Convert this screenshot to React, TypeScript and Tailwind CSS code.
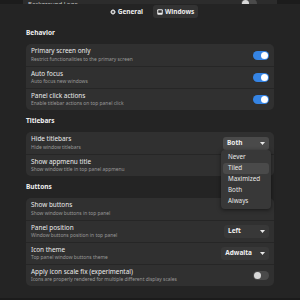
import { useState } from 'react';

type Row = { title: string; sub: string; control: 'on' | 'off' | string; open?: boolean };

const SECTIONS: { heading: string; rows: Row[] }[] = [
  {
    heading: 'Behavior',
    rows: [
      { title: 'Primary screen only', sub: 'Restrict functionalities to the primary screen', control: 'on' },
      { title: 'Auto focus', sub: 'Auto focus new windows', control: 'on' },
      { title: 'Panel click actions', sub: 'Enable titlebar actions on top panel click', control: 'on' },
    ],
  },
  {
    heading: 'Titlebars',
    rows: [
      { title: 'Hide titlebars', sub: 'Hide window titlebars', control: 'Both', open: true },
      { title: 'Show appmenu title', sub: 'Show window title in top panel appmenu', control: 'none' },
    ],
  },
  {
    heading: 'Buttons',
    rows: [
      { title: 'Show buttons', sub: 'Show window buttons in top panel', control: 'none' },
      { title: 'Panel position', sub: 'Window buttons position in top panel', control: 'Left' },
      { title: 'Icon theme', sub: 'Top panel window buttons theme', control: 'Adwaita' },
      { title: 'Apply icon scale fix (experimental)', sub: 'Icons are properly rendered for multiple different display scales', control: 'off' },
    ],
  },
];

const MENU = ['Never', 'Tiled', 'Maximized', 'Both', 'Always'];

function Toggle({ on }: { on: boolean }) {
  return (
    <div className={`w-[16px] h-[9px] rounded-full flex items-center px-[1px] ${on ? 'bg-[#3584e4] justify-end' : 'bg-[#4a4a4a] justify-start'}`}>
      <div className={`w-[7px] h-[7px] rounded-full ${on ? 'bg-white' : 'bg-[#d8d8d8]'}`} />
    </div>
  );
}

function Dropdown({ label, open }: { label: string; open?: boolean }) {
  return (
    <div className={`h-[13px] rounded-[3px] flex items-center justify-between pl-[4px] pr-[4px] gap-[8px] ${open ? 'bg-[#4a4a4a] w-[46px]' : 'bg-[#383838]'} ${label === 'Left' ? 'w-[45px]' : ''}`}>
      <span className="text-[6.5px] font-bold text-[#f0f0f0] leading-none">{label}</span>
      <svg width="5" height="3" viewBox="0 0 5 3"><path d="M0 0h5L2.5 3z" fill="#e8e8e8" /></svg>
    </div>
  );
}

function Menu() {
  const [active] = useState('Tiled');
  return (
    <div className="absolute left-[221px] top-[150px] w-[50px] rounded-[4px] bg-[#383838] shadow-[0_1px_4px_rgba(0,0,0,0.5)] px-[2px] py-[2px] flex flex-col">
      {MENU.map((m) => (
        <div key={m} className={`h-[11px] flex items-center px-[5px] rounded-[3px] text-[6.3px] text-[#e8e8e8] leading-none ${m === active ? 'bg-[#4a4a4a]' : ''}`}>
          {m}
        </div>
      ))}
    </div>
  );
}

export default function App() {
  return (
    <div className="relative w-[300px] h-[300px] overflow-hidden bg-[#242424] text-white" style={{ fontFamily: "'Noto Sans', 'DejaVu Sans', sans-serif" }}>
      {/* Previous group, scrolled out of view */}
      <div className="h-[4px] flex overflow-hidden">
        <div className="w-[23px] bg-[#1c1c1c]" />
        <div className="flex-1 bg-[#2c2c2c] flex items-end justify-between pl-[5px] pr-[10px]">
          <span className="text-[6px] text-[#cfcfcf] leading-[6px] translate-y-[3px]">Background Logo</span>
          <div className="flex items-end gap-[8px] translate-y-[4px]">
            <div className="w-[16px] h-[9px] rounded-full bg-[#4a4a4a] flex items-center px-[1px]">
              <div className="w-[7px] h-[7px] rounded-full bg-[#d8d8d8]" />
            </div>
            <div className="w-[2px] h-[2px] rounded-full bg-[#cfcfcf] mb-[2px]" />
          </div>
        </div>
        <div className="w-[23px] bg-[#1c1c1c]" />
      </div>

      {/* Tabs */}
      <div className="flex justify-center gap-[8px] mt-[1px] ml-[6px]">
        <div className="h-[13px] flex items-center gap-[2px] px-[2px] text-[6.5px] font-bold text-[#eeeeee]">
          <svg width="6" height="6" viewBox="0 0 12 12" fill="none" stroke="#eeeeee" strokeWidth="2">
            <circle cx="6" cy="6" r="3" />
            <path d="M6 0.5v2M6 9.5v2M0.5 6h2M9.5 6h2M2.1 2.1l1.4 1.4M8.5 8.5l1.4 1.4M2.1 9.9l1.4-1.4M8.5 3.5l1.4-1.4" />
          </svg>
          General
        </div>
        <div className="h-[13px] flex items-center gap-[2px] px-[4px] rounded-[3px] bg-[#333333] text-[6.5px] font-bold text-[#eeeeee]">
          <svg width="6" height="6" viewBox="0 0 12 12">
            <rect x="0.5" y="0.5" width="11" height="11" rx="2" fill="#eeeeee" />
            <rect x="2.5" y="2.5" width="7" height="5" fill="#333333" />
          </svg>
          Windows
        </div>
      </div>

      <div className="px-[26px] mt-[12px] flex flex-col">
        {SECTIONS.map((s, si) => (
          <div key={s.heading} className={si > 0 ? 'mt-[8px]' : ''}>
            <div className="text-[6.5px] font-bold text-[#f0f0f0] leading-none h-[8px] mb-[6px]">{s.heading}</div>
            <div className="rounded-[5px] bg-[#303030] flex flex-col">
              {s.rows.map((r, ri) => (
                <div key={r.title} className={`h-[22px] flex items-center justify-between pl-[5px] pr-[5px] ${ri > 0 ? 'border-t border-[#262626]' : ''}`}>
                  <div className="flex flex-col gap-[2px]">
                    <span className="text-[6.4px] text-[#ececec] leading-none">{r.title}</span>
                    <span className="text-[4.9px] text-[#9a9a9a] leading-none">{r.sub}</span>
                  </div>
                  {r.control === 'on' && <Toggle on />}
                  {r.control === 'off' && <Toggle on={false} />}
                  {r.control !== 'on' && r.control !== 'off' && r.control !== 'none' && <Dropdown label={r.control} open={r.open} />}
                </div>
              ))}
            </div>
          </div>
        ))}
      </div>

      <div className="absolute left-0 right-0 bottom-0 h-[2px] bg-[#1b1b1b]" />
      <Menu />
    </div>
  );
}
